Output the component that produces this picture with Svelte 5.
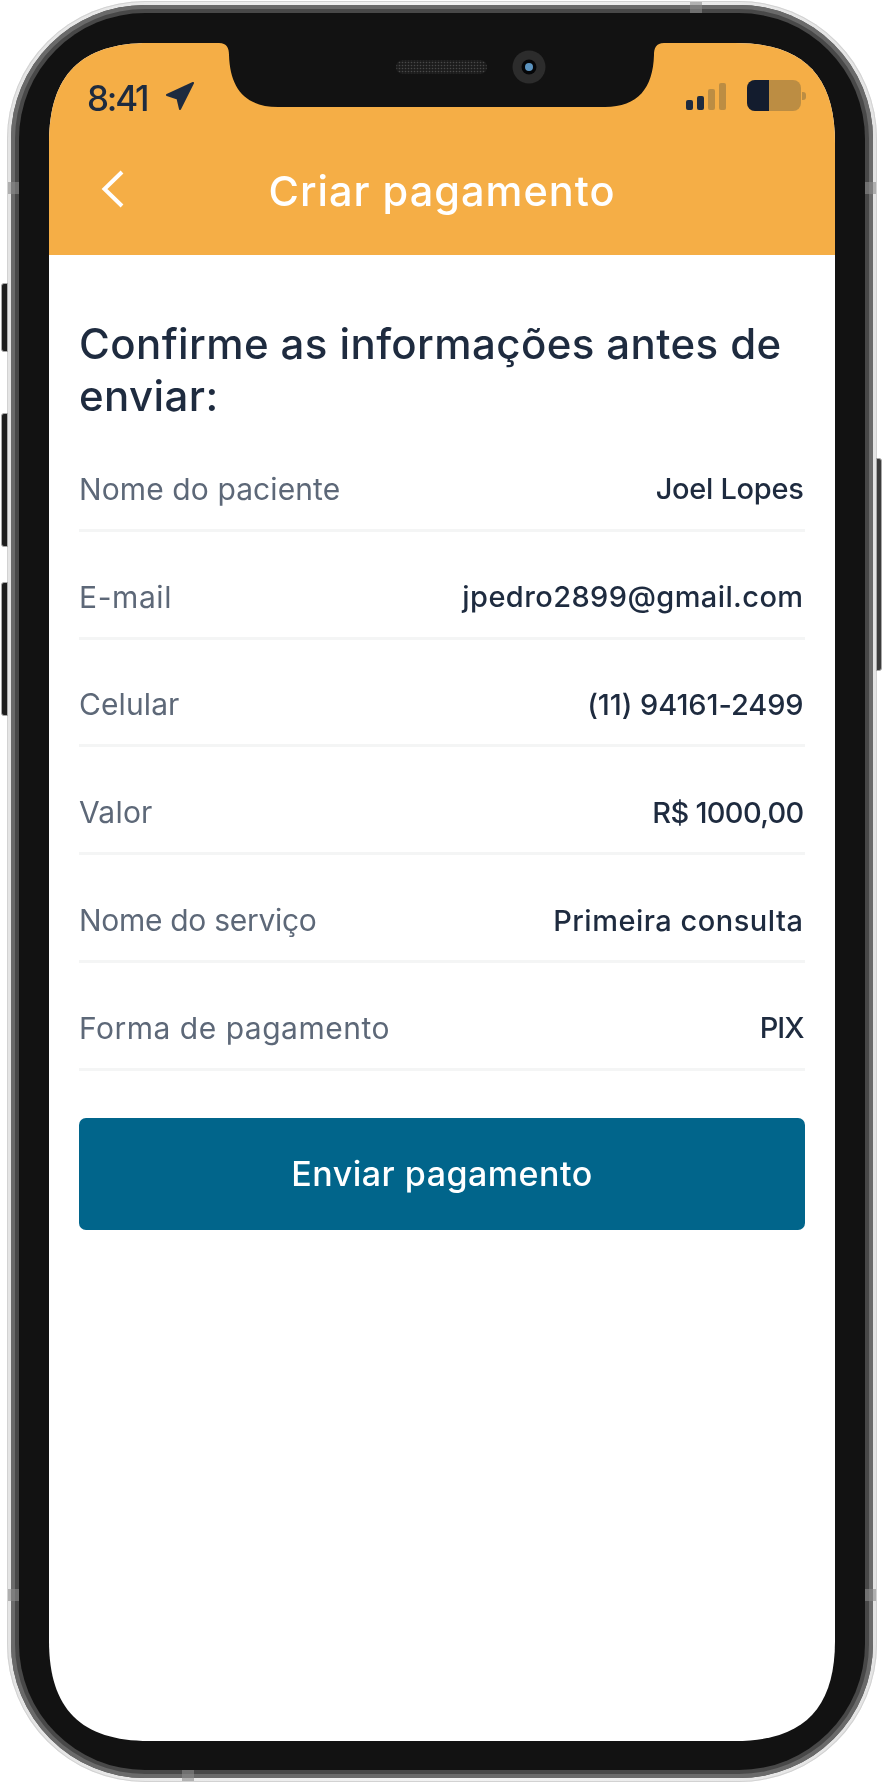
<script>
  const rows = [
    { label: 'Nome do paciente', value: 'Joel Lopes', labelTrack: 0.1, track: -0.3 },
    { label: 'E-mail', value: 'jpedro2899@gmail.com', labelTrack: 0.6, track: 0.4 },
    { label: 'Celular', value: '(11) 94161-2499', labelTrack: 0.1, track: -0.1 },
    { label: 'Valor', value: 'R$ 1000,00', labelTrack: 0.2, track: -0.7 },
    { label: 'Nome do serviço', value: 'Primeira consulta', labelTrack: -0.3, track: 0.5 },
    { label: 'Forma de pagamento', value: 'PIX', labelTrack: 0.5, track: -1 }
  ];
</script>

<div class="phone">
  <i class="btn mute"></i>
  <i class="btn vol-up"></i>
  <i class="btn vol-down"></i>
  <i class="btn power"></i>

  <div class="band">
    <div class="bezel">
      <div class="screen">
        <header class="header">
          <div class="status">
            <div class="clock">
              <span class="time">8:41</span>
              <svg class="arrow" width="28" height="28" viewBox="0 0 28 28">
                <path d="M27 1 L1 13 L11.5 16.5 L14 27 Z" fill="#1e2b3f" stroke="#1e2b3f" stroke-width="2" stroke-linejoin="round" />
              </svg>
            </div>
            <div class="indicators">
              <div class="signal">
                <i class="bar b1"></i>
                <i class="bar b2"></i>
                <i class="bar b3"></i>
                <i class="bar b4"></i>
              </div>
              <div class="battery">
                <i class="charge"></i>
              </div>
              <i class="nub"></i>
            </div>
          </div>
          <div class="nav">
            <svg class="back" width="24" height="38" viewBox="0 0 24 38">
              <path d="M21 2 L3.5 19 L21 36" fill="none" stroke="#fff" stroke-width="4" />
            </svg>
            <h1>Criar pagamento</h1>
          </div>
        </header>

        <svg class="notch" width="453" height="65" viewBox="0 0 453 65">
          <path d="M0 0 H453 H449 C441 0 439 5 439 12 C438 45 423 64 390 64 H63 C30 64 15 45 14 12 C14 5 12 0 4 0 Z" fill="#121212" />
          <rect x="181" y="17" width="91" height="14" rx="7" fill="url(#mesh)" />
          <circle cx="314" cy="24" r="16.5" fill="#2c2c2c" />
          <circle cx="314" cy="24" r="7.5" fill="#050608" />
          <circle cx="314" cy="24" r="4" fill="#5b93bf" />
          <defs>
            <pattern id="mesh" width="3" height="3" patternUnits="userSpaceOnUse">
              <rect width="3" height="3" fill="#1c1c1c" />
              <circle cx="1.5" cy="1.5" r="0.8" fill="#484848" />
            </pattern>
          </defs>
        </svg>

        <main class="content">
          <h2>Confirme as informações antes de enviar:</h2>
          <div class="rows">
            {#each rows as row}
              <div class="row">
                <span class="label" style:letter-spacing="{row.labelTrack}px">{row.label}</span>
                <span class="value" style:letter-spacing="{row.track}px">{row.value}</span>
              </div>
            {/each}
          </div>
          <button class="send">Enviar pagamento</button>
        </main>
      </div>
    </div>
  </div>

  <i class="seam seam-tl"></i>
  <i class="seam seam-bl"></i>
  <i class="seam seam-tr"></i>
  <i class="seam seam-br"></i>
  <i class="seam-h seam-top"></i>
  <i class="seam-h seam-bottom"></i>
</div>

<style>
  :global(body) {
    margin: 0;
    background: #fff;
  }
  .phone {
    position: relative;
    box-sizing: border-box;
    width: 870px;
    height: 1781px;
    margin: 1px 0 0 7px;
    padding: 4px;
    border-radius: 138px;
    background: linear-gradient(90deg, #e4e4e4, #f2f2f2 50%, #e4e4e4);
    box-shadow: inset 0 0 0 1px #d2d2d2;
  }
  .band {
    box-sizing: border-box;
    height: 100%;
    padding: 8px;
    border-radius: 134px;
    background: #484848;
    box-shadow: inset 0 0 0 4px #6a6a6a;
  }
  .bezel {
    box-sizing: border-box;
    height: 100%;
    padding: 30px;
    border-radius: 126px;
    background: #121212;
  }
  .screen {
    position: relative;
    width: 786px;
    height: 1698px;
    background: #fff;
    overflow: hidden;
    clip-path: path('M0 100 C0 32 32 0 100 0 H686 C754 0 786 32 786 100 V1598 C786 1666 754 1698 686 1698 H100 C32 1698 0 1666 0 1598 Z');
    font-family: Inter, 'Liberation Sans', sans-serif;
  }
  .header {
    height: 212px;
    box-sizing: border-box;
    background: #f5ae46;
  }
  .status {
    display: flex;
    justify-content: space-between;
    padding: 37px 29px 0 38px;
    height: 69px;
    box-sizing: border-box;
    filter: blur(0.35px);
  }
  .clock {
    display: flex;
    align-items: flex-start;
    gap: 19px;
  }
  .arrow {
    margin-top: 2px;
  }
  .time {
    font-size: 35px;
    font-weight: 500;
    line-height: 36px;
    letter-spacing: -2.2px;
    color: #1e2b3f;
  }
  .indicators {
    display: flex;
    align-items: flex-start;
    margin-top: 3px;
  }
  .signal {
    display: flex;
    align-items: flex-end;
    gap: 3.5px;
    height: 27px;
    margin-right: 21px;
  }
  .bar {
    display: block;
    width: 7.5px;
    border-radius: 2px;
    background: #1e2b3f;
  }
  .b1 { height: 10px; }
  .b2 { height: 14px; }
  .b3 { height: 21px; background: #bc8d43; }
  .b4 { height: 27px; background: #bc8d43; }
  .battery {
    width: 54px;
    height: 31px;
    margin-top: -3px;
    border-radius: 8px;
    background: #bc8d43;
    overflow: hidden;
  }
  .charge {
    display: block;
    width: 22px;
    height: 100%;
    background: #131c2e;
  }
  .nub {
    display: block;
    width: 4px;
    height: 8px;
    margin: 9px 0 0 1px;
    border-radius: 0 3px 3px 0;
    background: #bc8d43;
  }
  .nav {
    position: relative;
    display: flex;
    justify-content: center;
    align-items: center;
    height: 158px;
    box-sizing: border-box;
    filter: blur(0.35px);
  }
  .back {
    position: absolute;
    left: 52px;
    top: 58px;
  }
  h1 {
    margin: 0;
    font-size: 41.5px;
    font-weight: 500;
    letter-spacing: 1px;
    color: #fff;
  }
  .notch {
    position: absolute;
    left: 166px;
    top: 0;
  }
  .content {
    padding: 0 30px;
    filter: blur(0.35px);
  }
  h2 {
    margin: 0;
    padding-top: 63px;
    font-size: 42px;
    font-weight: 500;
    line-height: 52px;
    letter-spacing: 0.4px;
    color: #1e2b3f;
  }
  .rows {
    margin-top: 2px;
  }
  .row {
    display: flex;
    justify-content: space-between;
    align-items: center;
    height: 107.8px;
    box-sizing: border-box;
    padding: 25px 1.5px 0 0;
    border-bottom: 3px solid #f4f5f5;
  }
  .label {
    font-size: 30px;
    color: #5d6878;
  }
  .value {
    font-size: 29px;
    font-weight: 500;
    color: #1e2b3f;
  }
  .send {
    display: block;
    width: 100%;
    height: 112px;
    margin-top: 47px;
    border: 0;
    border-radius: 7px;
    background: #01658b;
    color: #fff;
    font-family: inherit;
    font-size: 34px;
    font-weight: 500;
    letter-spacing: 0.5px;
  }
  .btn {
    position: absolute;
    display: block;
    box-sizing: border-box;
    border: 1px solid #a8a8a8;
    background: #1c1c1c;
    width: 7px;
  }
  .mute { left: -6px; top: 282px; height: 69px; border-radius: 3px 0 0 3px; }
  .vol-up { left: -6px; top: 412px; height: 134px; border-radius: 3px 0 0 3px; }
  .vol-down { left: -6px; top: 581px; height: 134px; border-radius: 3px 0 0 3px; }
  .power { right: -5px; top: 457px; height: 213px; width: 6px; border-radius: 0 3px 3px 0; background: #3c3c3c; }
  .seam, .seam-h {
    position: absolute;
    display: block;
    background: rgba(140, 140, 140, 0.6);
  }
  .seam { width: 11px; height: 12px; }
  .seam-h { width: 12px; height: 11px; }
  .seam-tl { left: 1px; top: 181px; }
  .seam-bl { left: 1px; top: 1588px; }
  .seam-tr { right: 1px; top: 181px; }
  .seam-br { right: 1px; top: 1588px; }
  .seam-top { left: 683px; top: 1px; }
  .seam-bottom { left: 175px; bottom: 1px; }
</style>
